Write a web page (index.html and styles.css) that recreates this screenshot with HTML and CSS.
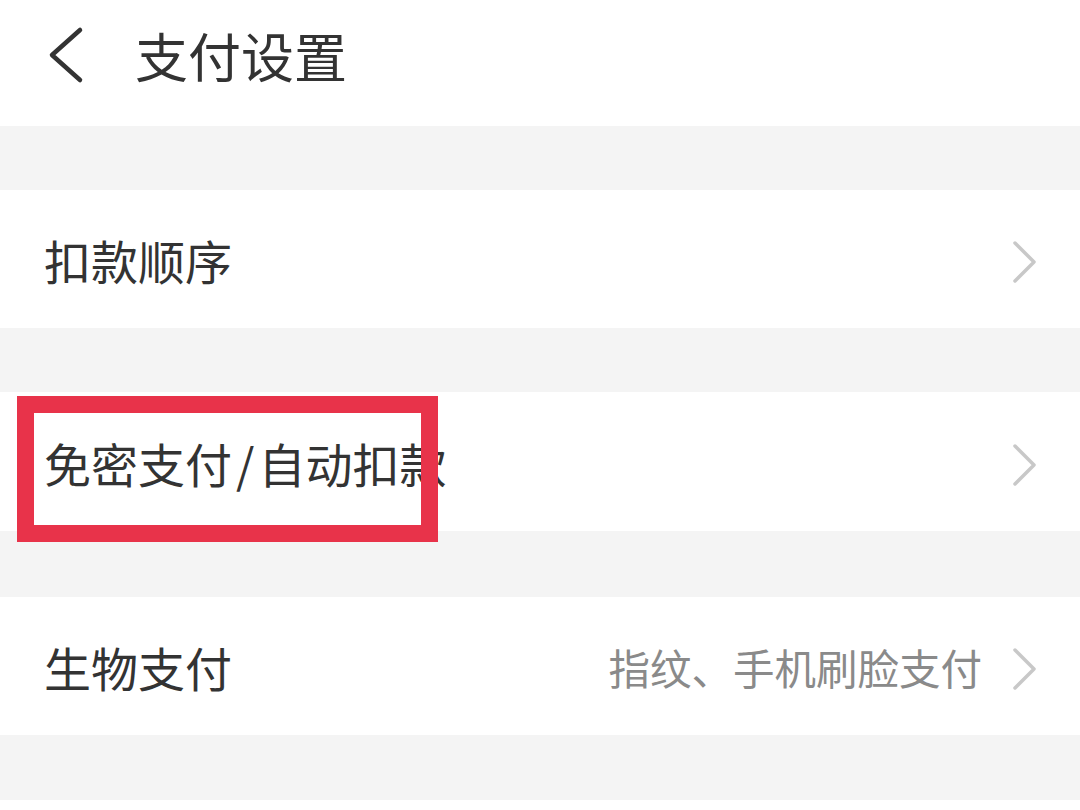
FILE: index.html
```html
<!DOCTYPE html>
<html lang="zh-CN">
<head>
<meta charset="utf-8">
<title>支付设置</title>
<link rel="stylesheet" href="styles.css">
</head>
<body>
<div class="page">
  <header class="header">
    <svg class="back" width="40" height="60" viewBox="0 0 40 60"><polyline points="34,5 6,30 34,55" fill="none" stroke="#333" stroke-width="4.5" stroke-linecap="round" stroke-linejoin="round"/></svg>
    <h1 class="title">支付设置</h1>
  </header>
  <div class="gap g1"></div>
  <div class="row r1">
    <span class="label">扣款顺序</span>
    <span class="right"><svg class="chev" width="30" height="46" viewBox="0 0 30 46"><polyline points="5,4 24,23 5,42" fill="none" stroke="#c8c8c8" stroke-width="3.5" stroke-linecap="round" stroke-linejoin="round"/></svg></span>
  </div>
  <div class="gap g2"></div>
  <div class="row r2">
    <span class="label">免密支付<span class="slash">/</span>自动扣款</span>
    <span class="right"><svg class="chev" width="30" height="46" viewBox="0 0 30 46"><polyline points="5,4 24,23 5,42" fill="none" stroke="#c8c8c8" stroke-width="3.5" stroke-linecap="round" stroke-linejoin="round"/></svg></span>
  </div>
  <div class="gap g3"></div>
  <div class="row r3">
    <span class="label">生物支付</span>
    <span class="right"><span class="sub">指纹、手机刷脸支付</span><svg class="chev" width="30" height="46" viewBox="0 0 30 46"><polyline points="5,4 24,23 5,42" fill="none" stroke="#c8c8c8" stroke-width="3.5" stroke-linecap="round" stroke-linejoin="round"/></svg></span>
  </div>
  <div class="gap g4"></div>
  <div class="mark"></div>
</div>
</body>
</html>
```
FILE: styles.css
```css
html, body {
  margin: 0;
  padding: 0;
  background: #ffffff;
}
body {
  width: 1080px;
  height: 810px;
  overflow: hidden;
  font-family: "Noto Sans CJK SC", "Noto Sans", sans-serif;
  color: #333333;
}
.page {
  position: relative;
  width: 1080px;
}
.header {
  height: 126px;
  display: flex;
  align-items: center;
  padding-left: 46px;
  box-sizing: border-box;
}
.back {
  display: block;
  margin-top: -16px;
}
.title {
  margin: -16px 0 0 49px;
  font-size: 53px;
  font-weight: 400;
  line-height: 60px;
  color: #333333;
}
.gap {
  background: #f4f4f4;
}
.g1 { height: 64px; }
.g2 { height: 64px; }
.g3 { height: 66px; }
.g4 { height: 65px; }
.row {
  display: flex;
  align-items: center;
  justify-content: space-between;
  padding: 0 40px 0 44px;
  background: #ffffff;
  box-sizing: border-box;
}
.r1 { height: 138px; }
.r2 { height: 139px; }
.r3 { height: 138px; }
.label {
  font-size: 47px;
  line-height: 60px;
  color: #333333;
  margin-top: 2px;
}
.slash {
  margin: 0 4px;
}
.right {
  display: flex;
  align-items: center;
  margin-top: 6px;
}
.sub {
  font-size: 41.5px;
  line-height: 56px;
  color: #8a8a8a;
  margin-right: 28px;
  margin-top: -4px;
}
.chev {
  display: block;
}
.mark {
  position: absolute;
  left: 17px;
  top: 396px;
  width: 421px;
  height: 146px;
  box-sizing: border-box;
  border: 17px solid #e8334a;
}
```
